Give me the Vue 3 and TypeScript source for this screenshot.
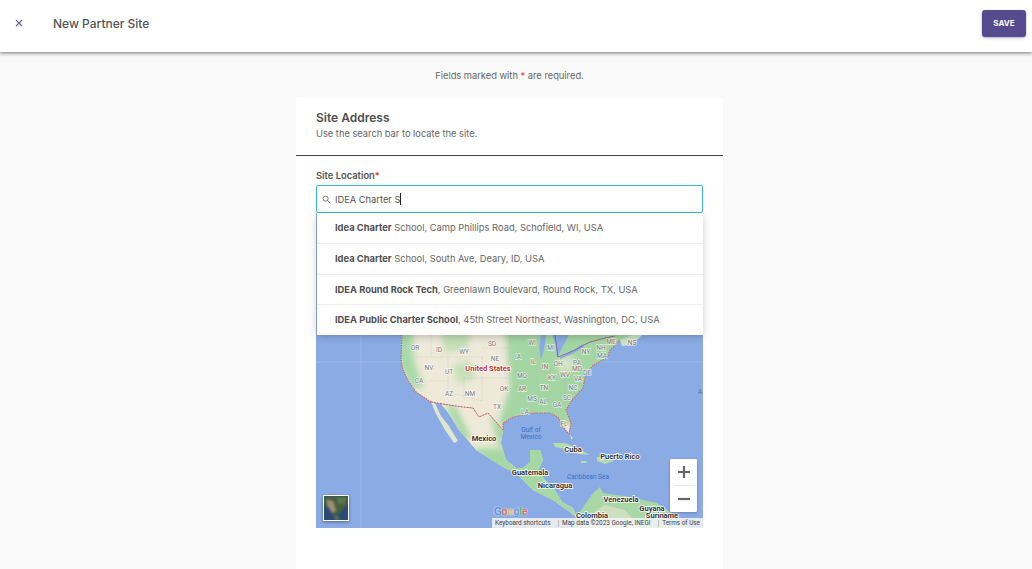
<script setup lang="ts">
interface Label { t: string; x: number; y: number }
const suggestions = [
  { bold: 'Idea Charter', rest: ' School, Camp Phillips Road, Schofield, WI, USA' },
  { bold: 'Idea Charter', rest: ' School, South Ave, Deary, ID, USA' },
  { bold: 'IDEA Round Rock Tech', rest: ', Greenlawn Boulevard, Round Rock, TX, USA' },
  { bold: 'IDEA Public Charter School', rest: ', 45th Street Northeast, Washington, DC, USA' },
]
const states: Label[] = [
  { t: 'OR', x: 415, y: 348 }, { t: 'ID', x: 439, y: 350 }, { t: 'WY', x: 464, y: 352 }, { t: 'SD', x: 492, y: 344 },
  { t: 'NE', x: 495, y: 359 }, { t: 'NV', x: 429, y: 368 }, { t: 'UT', x: 449, y: 372 }, { t: 'CA', x: 419, y: 381 },
  { t: 'AZ', x: 449, y: 394 }, { t: 'NM', x: 470, y: 394 }, { t: 'OK', x: 504, y: 389 }, { t: 'TX', x: 497, y: 407 },
  { t: 'WI', x: 532, y: 343 }, { t: 'MI', x: 551, y: 348 }, { t: 'IA', x: 518, y: 357 }, { t: 'IL', x: 533, y: 362 },
  { t: 'IN', x: 545, y: 367 }, { t: 'OH', x: 558, y: 364 }, { t: 'PA', x: 577, y: 363 }, { t: 'MD', x: 577, y: 369 },
  { t: 'DE', x: 587, y: 373 }, { t: 'WV', x: 565, y: 375 }, { t: 'KY', x: 552, y: 378 }, { t: 'VA', x: 578, y: 379 },
  { t: 'MO', x: 522, y: 376 }, { t: 'NC', x: 573, y: 388 }, { t: 'TN', x: 544, y: 388 }, { t: 'AR', x: 522, y: 389 },
  { t: 'SC', x: 567, y: 398 }, { t: 'MS', x: 532, y: 399 }, { t: 'AL', x: 543, y: 402 }, { t: 'GA', x: 557, y: 405 },
  { t: 'LA', x: 525, y: 412 }, { t: 'FL', x: 564, y: 424 }, { t: 'NY', x: 586, y: 352 }, { t: 'NH', x: 601, y: 348 },
  { t: 'MA', x: 602, y: 356 }, { t: 'ME', x: 611, y: 342 }, { t: 'NS', x: 632, y: 343 },
]
const places: Label[] = [
  { t: 'Mexico', x: 484, y: 438 }, { t: 'Cuba', x: 573, y: 449 }, { t: 'Puerto Rico', x: 620, y: 456 },
  { t: 'Guatemala', x: 530, y: 472 }, { t: 'Nicaragua', x: 555, y: 485 }, { t: 'Venezuela', x: 621, y: 499 },
  { t: 'Guyana', x: 652, y: 508 }, { t: 'Colombia', x: 592, y: 515 }, { t: 'Suriname', x: 662, y: 515 },
]
const seas: Label[] = [
  { t: 'Gulf of', x: 531, y: 430 }, { t: 'Mexico', x: 531, y: 437 }, { t: 'Caribbean Sea', x: 588, y: 477 }, { t: 'A', x: 700, y: 392 },
]
const usPath = 'M402 213 L660 213 L633 335 L620 340 L610 350 L607 358 L593 365 L585 377 L583 388 L572 400 L566 410 L571 423 L569 434 L563 427 L558 417 L550 413 L533 413 L513 417 L503 423 L503 430 L496 422 L488 413 L479 417 L473 408 L463 407 L449 405 L431 402 L416 392 L409 382 L403 370 L401 360 Z'
</script>

<template>
  <div class="page">
    <header class="topbar">
      <svg class="close" viewBox="0 0 10 10" width="10" height="10" aria-label="Close">
        <path d="M2 2 L8 8 M8 2 L2 8" />
      </svg>
      <h1 class="title">New Partner Site</h1>
      <button class="save">SAVE</button>
    </header>

    <div class="column">
      <p class="hint">Fields marked with <span class="req">*</span> are required.</p>

      <section class="card">
        <div class="card-head">
          <h2>Site Address</h2>
          <p>Use the search bar to locate the site.</p>
        </div>
        <div class="card-body">
          <label class="field-label">Site Location<span class="req">*</span></label>
          <div class="search-wrap">
            <div class="search">
              <svg class="mag" viewBox="0 0 10 10" width="9" height="9"><circle cx="4" cy="4" r="2.8" /><path d="M6.2 6.2 L9.2 9.2" /></svg>
              <span class="query">IDEA Charter S</span><span class="caret"></span>
            </div>
            <ul class="dropdown">
              <li v-for="s in suggestions" :key="s.rest"><b>{{ s.bold }}</b>{{ s.rest }}</li>
            </ul>
          </div>

          <div class="map">
            <svg class="map-svg" viewBox="316 213 387 315" width="387" height="315">
              <defs>
                <filter id="soft" x="-5%" y="-5%" width="110%" height="110%"><feGaussianBlur stdDeviation="0.6" /></filter>
                <filter id="softer" x="-20%" y="-20%" width="140%" height="140%"><feGaussianBlur stdDeviation="3" /></filter>
                <clipPath id="us"><path :d="usPath" /></clipPath>
                <clipPath id="mx"><path d="M441 404 L463 407 L473 408 L479 417 L488 413 L496 422 L503 430 L501 443 L506 460 L516 468 L523 468 L530 462 L530 450 L540 450 L543 460 L538 470 L545 480 L553 487 L562 502 L573 508 L577 518 L570 512 L553 500 L533 490 L516 473 L503 467 L476 450 L459 430 L449 414 Z" /></clipPath>
              </defs>
              <rect x="316" y="213" width="387" height="315" fill="#8aabe3" />
              <path d="M361 213 V528 M316 362 H402 M593 362 H703" stroke="#a3bdea" stroke-width="0.8" fill="none" />
              <g filter="url(#soft)">
                <path fill="#eee9d9" :d="usPath" />
                <g clip-path="url(#us)">
                  <path fill="#a4d6a3" filter="url(#softer)" d="M505 328 L640 328 L600 370 L575 425 L498 425 L510 385 Z" />
                  <path fill="#a9d9a8" filter="url(#softer)" d="M396 330 L412 330 L414 360 L424 388 L412 388 L396 360 Z" />
                  <path fill="#c2dfb6" filter="url(#softer)" d="M440 330 L472 330 L466 350 L445 352 Z" />
                  <path fill="#c6e1ba" filter="url(#softer)" d="M452 365 L470 360 L475 378 L458 385 Z" />
                  <path fill="#efead9" filter="url(#softer)" d="M558 358 L575 355 L572 372 L558 372 Z" opacity=".7" />
                </g>
                <path fill="#8aabe3" d="M541 335 L546 335 L544 350 L541 359 L539 348 Z" />
                <path fill="#8aabe3" d="M552 335 L569 335 L562 348 L557 358 L556 350 L555 342 Z" />
                <path fill="#8aabe3" d="M560 357 L574 350 L582 344 L584 347 L572 354 L560 359 Z" />
                <path fill="#cfe6c6" d="M620 340 L633 335 L642 335 L632 345 L622 346 Z" />
                <path fill="#dfe6cf" d="M431 402 L435 403 L441 416 L449 426 L458 441 L454 443 L445 430 L436 414 Z" />
                <path fill="#efe9d9" d="M441 404 L463 407 L473 408 L479 417 L488 413 L496 422 L503 430 L501 443 L506 460 L516 468 L523 468 L530 462 L530 450 L540 450 L543 460 L538 470 L545 480 L553 487 L562 502 L573 508 L577 518 L570 512 L553 500 L533 490 L516 473 L503 467 L476 450 L459 430 L449 414 Z" />
                <g clip-path="url(#mx)">
                  <path fill="#a6d8a4" filter="url(#softer)" d="M500 448 L520 455 L560 470 L585 525 L540 505 L495 470 L470 448 Z" />
                  <path fill="#a6d8a4" filter="url(#softer)" d="M445 405 L455 405 L472 440 L462 440 Z" />
                  <path fill="#a6d8a4" filter="url(#softer)" d="M490 415 L508 428 L506 455 L498 445 Z" />
                  <path fill="#a6d8a4" d="M525 450 L545 450 L545 480 L525 470 Z" />
                </g>
                <path fill="#a9d8a6" d="M577 528 L577 516 L593 493 L600 487 L603 493 L630 497 L657 503 L677 517 L690 528 Z" />
                <path fill="#e4e4cf" d="M590 515 L605 505 L625 510 L640 528 L590 528 Z" opacity=".6" />
                <path fill="#b5dcae" d="M553 443 L565 443 L577 448 L590 455 L578 454 L565 449 L555 447 Z" />
                <path fill="#b5dcae" d="M597 457 L607 457 L614 461 L605 464 L597 461 Z" />
                <path fill="#b5dcae" d="M581 461 L587 461 L586 463 L581 463 Z" />
                <path fill="#d0e6c9" d="M570 434 L573 439 L571 439 Z" />
              </g>
              <path class="state-line" d="M431 335 L431 357 M416 357 H482 M448 357 V392 M431 381 H448 M448 392 L482 401 M482 378 V401 M464 378 V400 M464 378 H510 M482 357 V378 M482 348 H510 M510 335 V390 M516 372 H560 M537 352 V395 M550 372 V410 M565 365 V400 M540 400 H566 M520 395 H540 M575 372 L556 385 M560 393 H582" />
              <path class="us-border" d="M431 402 L449 405 L463 407 L473 408 L479 417 L488 413 L496 422 L503 430" />
              <path class="us-coast" d="M402 335 L401 360 L403 370 L409 382 L416 392 L431 402 M503 430 L503 423 L513 417 L533 413 L550 413 L558 417 L563 427 L569 434 L571 423 L566 410 L572 400 L583 388 L585 377 L593 365 L607 358 L610 350 L620 340" />
              <path class="canada" d="M555 335 L558 357 L575 350 L582 346 L590 342 L605 338 L615 336" />

              <text v-for="s in states" :key="s.t" class="state" :x="s.x" :y="s.y" dy="2.4">{{ s.t }}</text>
              <text class="country-us" x="488" y="368" dy="2.6">United States</text>
              <text v-for="p in places" :key="p.t" class="place" :x="p.x" :y="p.y" dy="2.6">{{ p.t }}</text>
              <text v-for="s in seas" :key="s.t" class="sea" :x="s.x" :y="s.y" dy="2.4">{{ s.t }}</text>
            </svg>

            <div class="thumb">
              <svg viewBox="0 0 26 26" width="24" height="24">
                <defs><filter id="sat"><feGaussianBlur stdDeviation="1" /></filter></defs>
                <rect width="26" height="26" fill="#2c4a73" />
                <g filter="url(#sat)">
                  <path d="M0 0 H26 V10 L20 14 L16 20 L10 18 L4 12 L0 10 Z" fill="#46603f" />
                  <path d="M3 4 L10 6 L13 16 L9 19 L4 11 Z" fill="#9c9170" />
                  <path d="M14 2 L24 2 L22 8 L15 8 Z" fill="#5f7a4d" />
                  <path d="M10 19 L15 22 L18 26 L12 26 Z" fill="#587248" />
                </g>
              </svg>
            </div>

            <span class="google"><i class="b">G</i><i class="r">o</i><i class="y">o</i><i class="b">g</i><i class="g">l</i><i class="r">e</i></span>

            <div class="attrib">
              <span>Keyboard shortcuts</span>
              <span class="sep">Map data ©2023 Google, INEGI</span>
              <span class="sep">Terms of Use</span>
            </div>

            <div class="zoom">
              <div class="zoom-btn">
                <svg viewBox="0 0 14 14" width="14" height="14"><path d="M7 1 V13 M1 7 H13" /></svg>
              </div>
              <div class="zoom-sep"></div>
              <div class="zoom-btn">
                <svg viewBox="0 0 14 14" width="14" height="14"><path d="M1 7 H13" /></svg>
              </div>
            </div>
          </div>
        </div>
      </section>
    </div>
  </div>
</template>

<style>
html, body { margin: 0; height: 100%; overflow: hidden; background: #f9f9f9; }
</style>

<style scoped>
.page {
  height: 569px;
  overflow: hidden;
  background: #f9f9f9;
  font-family: Inter, "Liberation Sans", sans-serif;
  color: #555;
}
.topbar {
  display: flex;
  align-items: center;
  height: 52px;
  padding: 0 6px 6px 14px;
  box-sizing: border-box;
  background: #fff;
  box-shadow: 0 1px 4px rgba(0, 0, 0, .55);
  position: relative;
}
.close { fill: none; stroke: #6a5fa3; stroke-width: 1.1; }
.title {
  margin: 0 0 0 29px;
  font-size: 12px;
  font-weight: 500;
  color: #555;
  flex: 1;
}
.save {
  width: 44px;
  height: 27px;
  padding: 0;
  border: none;
  border-radius: 3px;
  background: #574b90;
  color: #fff;
  font: 700 8px Inter, "Liberation Sans", sans-serif;
  box-shadow: 0 1px 3px rgba(0, 0, 0, .3);
}
.column { width: 427px; margin-left: 296px; }
.hint {
  margin: 17px 0 15px;
  height: 13px;
  line-height: 13px;
  text-align: center;
  font-size: 9.3px;
  color: #666;
}
.req { color: #e0443e; }
.card {
  height: 480px;
  background: #fff;
  border-radius: 4px 4px 0 0;
}
.card-head {
  height: 59px;
  padding: 14px 20px 0;
  box-sizing: border-box;
  border-bottom: 1px solid #3f3f4e;
}
.card-head h2 {
  margin: 0;
  font-size: 12px;
  line-height: 14px;
  font-weight: 600;
  color: #4f4f4f;
}
.card-head p {
  margin: 3px 0 0;
  font-size: 9.3px;
  line-height: 12px;
  color: #666;
}
.card-body { padding: 14px 20px 0; }
.field-label {
  display: block;
  font-size: 9.4px;
  line-height: 12px;
  font-weight: 600;
  color: #555;
  margin-bottom: 3px;
}
.search-wrap { position: relative; }
.search {
  display: flex;
  align-items: center;
  height: 28px;
  padding-left: 5px;
  box-sizing: border-box;
  border: 1.5px solid #35bfc4;
  border-radius: 2px;
  background: #fff;
  font-size: 9.3px;
  color: #555;
}
.mag { fill: none; stroke: #777; stroke-width: 1.1; margin-right: 4px; }
.caret { width: 1px; height: 12px; background: #222; }
.dropdown {
  position: absolute;
  z-index: 2;
  top: 28px;
  left: 1px;
  right: 0;
  margin: 0;
  padding: 0;
  list-style: none;
  background: #fff;
  box-shadow: 0 2px 8px rgba(0, 0, 0, .2);
}
.dropdown li {
  height: 30.5px;
  line-height: 30px;
  padding-left: 18px;
  box-sizing: border-box;
  font-size: 9.33px;
  color: #666;
  white-space: nowrap;
  border-top: 1px solid #eee;
}
.dropdown li:first-child { border-top: none; height: 30px; line-height: 30px; }
.dropdown li:last-child { height: 31px; }
.dropdown b { font-weight: 700; color: #4f4f4f; }
.map {
  position: relative;
  width: 387px;
  height: 315px;
  overflow: hidden;
}
.map-svg { display: block; }
.state-line { fill: none; stroke: #b5b3a5; stroke-width: .4; stroke-dasharray: 1.2 1.2; }
.us-border { fill: none; stroke: #c4545a; stroke-width: 1; stroke-dasharray: 2 1; }
.us-coast { fill: none; stroke: #cf5f64; stroke-width: 1.1; stroke-dasharray: 1.5 1; }
.canada { fill: none; stroke: #8b5f9c; stroke-width: .9; }
.state {
  font: 6.5px Roboto, sans-serif;
  fill: #777;
  text-anchor: middle;
  stroke: #fff;
  stroke-width: 1.4;
  stroke-opacity: .7;
  paint-order: stroke;
}
.country-us {
  font: 700 7.5px Roboto, sans-serif;
  fill: #c6322f;
  text-anchor: middle;
  stroke: #fff;
  stroke-width: 1.5;
  paint-order: stroke;
}
.place {
  font: 700 7.5px Roboto, sans-serif;
  fill: #333;
  text-anchor: middle;
  stroke: #fff;
  stroke-width: 1.5;
  paint-order: stroke;
}
.sea {
  font: 6.5px Roboto, sans-serif;
  fill: #3a6fc4;
  text-anchor: middle;
}
.thumb {
  position: absolute;
  left: 7px;
  bottom: 7px;
  width: 24px;
  height: 24px;
  border: 1px solid #fff;
  box-shadow: 0 1px 3px rgba(0, 0, 0, .4);
  display: flex;
}
.google {
  position: absolute;
  left: 178px;
  bottom: 11px;
  font: 700 10px "Liberation Sans", sans-serif;
  letter-spacing: -.2px;
  text-shadow: 0 0 2px #fff;
}
.google i { font-style: normal; }
.google .b { color: #5f8ee8; }
.google .r { color: #e06a5c; }
.google .y { color: #e8c04a; }
.google .g { color: #55b56c; }
.attrib {
  position: absolute;
  right: 0;
  bottom: 0;
  width: 211px;
  height: 10px;
  box-sizing: border-box;
  display: flex;
  justify-content: space-between;
  align-items: center;
  padding: 0 3px;
  background: rgba(245, 245, 245, .85);
  font: 6.4px/10px Roboto, sans-serif;
  color: #444;
  white-space: nowrap;
}
.sep { border-left: 1px solid #bbb; padding-left: 3px; line-height: 7px; }
.zoom {
  position: absolute;
  right: 6px;
  bottom: 16px;
  width: 27px;
  height: 53px;
  background: #fff;
  border-radius: 1px;
  box-shadow: 0 1px 3px rgba(0, 0, 0, .25);
  display: flex;
  flex-direction: column;
  align-items: center;
}
.zoom-btn { flex: 1; display: flex; align-items: center; justify-content: center; }
.zoom-btn svg { fill: none; stroke: #666; stroke-width: 2.2; }
.zoom-sep { width: 20px; height: 1px; background: #e6e6e6; }
</style>
